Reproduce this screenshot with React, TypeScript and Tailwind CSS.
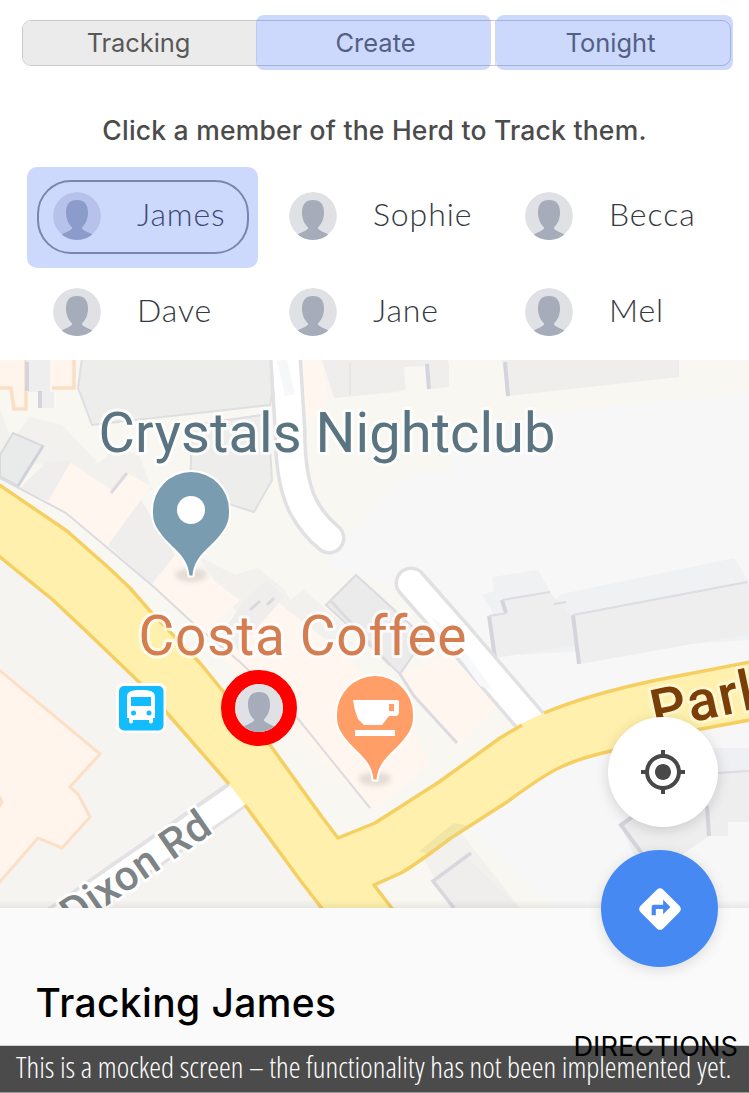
import { MdDirections, MdMyLocation } from "react-icons/md";

const members = ["James", "Sophie", "Becca", "Dave", "Jane", "Mel"];

function Avatar() {
  return (
    <svg viewBox="0 0 48 48" className="block size-12 shrink-0 rounded-full">
      <circle cx="24" cy="24" r="24" fill="#dfe1e5" />
      <path
        d="M24 8C16.500 8 13 12.500 13 20.500C13 27 15.500 32 19 35.500C20 37 17 38.500 8.500 42.500L8 48H40L39.500 42.500C31 38.500 28 37 29 35.500C32.500 32 35 27 35 20.500C35 12.500 31.500 8 24 8Z"
        fill="#a6acb9"
      />
    </svg>
  );
}

function Tabs() {
  return (
    <nav className="relative mt-5 ml-[21.500px] flex h-[46px] w-[709px] rounded-[9px] border border-[#c9c9c9] text-[25.500px] leading-[44px] text-[#585858]">
      <div className="w-[234px] rounded-l-[8px] bg-[#ebebeb] pr-0.5 text-center">
        <span className="tracking-[-0.100px]">Tracking</span>
      </div>
      <div className="w-[239px] border-r border-[#d9d9d9] text-center">Create</div>
      <div className="flex-1 pr-1 text-center">Tonight</div>
      <div className="absolute -top-[6px] left-[233.500px] h-[55px] w-[235px] rounded-[8px] bg-[#4b74f7]/28" />
      <div className="absolute -top-[6px] left-[473px] h-[55px] w-[237px] rounded-[8px] bg-[#4b74f7]/28" />
    </nav>
  );
}

function Members() {
  return (
    <div className="mt-[20px] ml-[37px] grid grid-cols-[236px_236px_236px] grid-rows-[96px_96px]">
      {members.map((name, i) => (
        <div key={name} className="relative flex items-center pl-4">
          <Avatar />
          <span className="mb-[4px] ml-9 font-['Lato',sans-serif] text-[32px] leading-none font-light tracking-[0.900px] text-[#353941]">
            {name}
          </span>
          {i === 0 && (
            <>
              <div className="absolute top-[12px] left-0 h-[74px] w-[212px] rounded-[34px] border-2 border-[#8b8e94]" />
              <div className="absolute -top-[1px] -left-[10px] h-[101px] w-[230.500px] rounded-[10px] bg-[#4b74f7]/28" />
            </>
          )}
        </div>
      ))}
    </div>
  );
}

function StreetMap() {
  return (
    <svg viewBox="0 360 749 548" className="block h-[548px] w-[749px]">
      <defs>
        <filter id="soft" x="-50%" y="-50%" width="200%" height="200%">
          <feGaussianBlur stdDeviation="2.500" />
        </filter>
        <linearGradient id="edge" x1="0" y1="0" x2="0" y2="1">
          <stop offset="0" stopColor="#000" stopOpacity="0" />
          <stop offset="1" stopColor="#000" stopOpacity="0.060" />
        </linearGradient>
      </defs>
      <rect y="360" width="749" height="548" fill="#f8f7f2" />
      <path d="M749 393L600 407L500 422L452 440V470L408 475L374 505L325 565L410 590L530 725L749 670Z" fill="#f7f7f7" />
      <path d="M470 825L560 760L749 715V908H554Z" fill="#f7f7f7" />
      <path d="M0 555L88 633L167 713L245 805L322 908H0Z" fill="#f5f4f0" />

      <g fill="#f2f1ee">
        <path d="M0 410L12 440L30 417L62 425L98 463L120 446L140 457L152 490L110 500L65 470L0 455Z" />
        <path d="M198 556L235 575L246 571L258 568L285 590L290 600L304 590L350 630L300 690L235 610Z" />
        <path d="M325 360H374L400 392L334 398Z" />
        <path d="M378 873L454 822L550 908H394Z" fill="#f8f7f1" />
        <path d="M420 852L454 824L520 908H450Z" />
      </g>

      <g fill="#fff6f0">
        <path d="M70 462L112 490L127 473L151 486L108 545L48 501Z" />
        <path d="M176 553L240 600L205 634L153 585Z" />
        <path d="M275 600L345 655L415 735L430 765L376 810L330 768L240 676L210 642Z" />
        <path d="M400 675L455 650L505 700L459 745L414 696Z" />
        <path d="M294 360H322L328 398L312 420L297 418Z" />
      </g>
      <g fill="#efeeed">
        <path d="M47 462L72 460L48 501L20 488Z" />
        <path d="M141 500L175 555L151 585L108 545Z" />
        <path d="M245 600L266 580L285 596L238 650L222 633Z" />
        <path d="M322 360H679V377L508 396L502 360H448L449 386L430 388L427 366L404 367L406 390L334 398Z" />
      </g>
      <path d="M404 368H427L432 388L449 387V362H492L508 396L406 391Z" fill="#f8f7f1" />
      <path d="M430 365L449 364V387L431 389Z" fill="#efeeed" />
      <path d="M82 358H270L277 370L270 405L92 425L78 388Z" fill="#ededec" stroke="#dfdee1" strokeWidth="2" />
      <path d="M192 425L268 414L272 480L254 512L190 492Z" fill="#ededec" stroke="#dfdee1" strokeWidth="2" />
      <path d="M13 433L43 446L18 486L0 476V455Z" fill="#e9ebeb" stroke="#dad9df" strokeWidth="2" />
      <path d="M43 446L18 486" stroke="#d2d1da" strokeWidth="3" />
      <path d="M127 473L111 493M250 610L260 601M267 605L274 598" stroke="#dcd8de" strokeWidth="3" />
      <path d="M326 605L356 575L425 638L400 674Z" fill="#ebebeb" stroke="#dcdbdf" strokeWidth="2" />
      <path d="M0 478L66 513L110 550L155 588L195 625L240 662L295 715L370 808" fill="none" stroke="#dedbdf" strokeWidth="2" />
      <path d="M400 674L414 696L457 743M330 600L390 665" stroke="#dddbdf" strokeWidth="3" fill="none" />

      <path d="M0 360H28L24 386V408H14L11 388H0Z" fill="#fff5ec" />
      <path d="M0 388H11L14 409H26V360" fill="none" stroke="#fbdfc4" strokeWidth="3.500" />
      <path d="M50 360H73V387H52Z" fill="#fff5ec" />
      <path d="M52 388H74V360" fill="none" stroke="#fbdfc4" strokeWidth="3.500" />
      <path d="M27 360H50V392H54V408H39V392H27Z" fill="#eeeeee" />
      <path d="M27 362V391M40 391V408" stroke="#d5d4dc" strokeWidth="4" />
      <path d="M350 362V395" stroke="#e4e3e5" strokeWidth="1.500" />

      <path d="M492 577L538 570L555 600L562 594L734 558L749 582V640L520 655L482 595L494 591Z" fill="#eff1f3" />
      <path d="M502 600L549 592L560 604L572 616L578 645L495 658L488 616L506 614Z" fill="#eeeeee" />
      <path d="M573 615L746 582H749V634L580 664Z" fill="#eeeeee" />
      <path d="M495 658L489 616M506 613L502 600M579 664L573 615M429 389L427 364M508 396L505 362" fill="none" stroke="#d4d4dc" strokeWidth="4" />
      <path d="M489 616L507 613M502 600L550 592M573 615L747 582M554 604L566 602" fill="none" stroke="#dcdce1" strokeWidth="2" />

      <path d="M285 350L290 430Q290 480 303 506Q313 525 329 538" fill="none" stroke="#e1e1e3" strokeWidth="33" strokeLinecap="round" />
      <path d="M285 350L290 430Q290 480 303 506Q313 525 329 538" fill="none" stroke="#fff" strokeWidth="26" strokeLinecap="round" />
      <path d="M282 360L290 395" stroke="#f5f7f9" strokeWidth="10" />
      <path d="M411 583L455 633L540 732" fill="none" stroke="#e1e1e3" strokeWidth="33" strokeLinecap="round" />
      <path d="M411 583L455 633L540 732" fill="none" stroke="#fff" strokeWidth="26" strokeLinecap="round" />
      <path d="M430 616L448 629L494 691L480 686Z" fill="#f7f8f9" />
      <path d="M241 792L50 925" stroke="#e2e2e4" strokeWidth="31" />
      <path d="M245 790L50 925" stroke="#fff" strokeWidth="24" />

      <path
        d="M-5 482L67 531L110 569L130 588L150 611L200 663L222 690L270 745L322 817L338 838L375 823L439 782L500 738Q520 723 544 713Q590 694 657 680L755 661V719L701 729L611 751Q580 758 561 767Q545 774 507 802L451 838Q415 865 401 873L374 885L397 915H327L300 880L245 805L229 784L167 713L138 681L88 633L53 600L-5 553Z"
        fill="#fff0ad"
      />
      <path d="M-5 482L67 531L110 569L130 588L150 611L200 663L222 690L270 745L322 817L338 838L375 823L439 782L500 738L522 725M544 713Q590 694 657 680L755 661M755 719L701 729L611 751Q580 758 561 767Q545 774 507 802L451 838Q415 865 401 873L374 885L397 915M327 915L300 880L245 805M229 784L167 713L138 681L88 633L53 600L-5 553" fill="none" stroke="#f6cf62" strokeWidth="3.500" strokeLinejoin="round" />
      <path d="M419 851L454 823L470 826L428 854Z" fill="#d9d59b" opacity="0.350" />

      <path d="M0 670L100 754L70 787L78 792L90 817L62 848L38 838L0 884Z" fill="#fff5ec" />
      <path d="M-2 669L100 754L70 787L78 794L90 817L62 848L38 838L-2 884M-1 796L2 802L-1 807" fill="none" stroke="#fddfc5" strokeWidth="3" />

      <path d="M433 881L466 857L520 908H452Z" fill="#efeeed" />
      <path d="M471 853L433 881L454 908" fill="none" stroke="#d8d7de" strokeWidth="3.500" />
      <path d="M700 748H749V775H718L700 790Z" fill="#eef0f3" />
      <path d="M715 773H749V822H728V836H709L645 880L621 826L660 800Z" fill="#eeeeee" />
      <path d="M635 815L621 825L643 855M707 806L709 836" fill="none" stroke="#d4d4dc" strokeWidth="4" />
      <path d="M717 773L749 771" fill="none" stroke="#dcdce1" strokeWidth="2" />

      <g fontFamily="Roboto, sans-serif" strokeLinejoin="round" style={{ paintOrder: "stroke" }}>
        <text x="98.500" y="452" fontSize="56" textLength="457" fill="#5b7482" stroke="#fff" strokeOpacity="0.750" strokeWidth="6">
          Crystals Nightclub
        </text>
        <text x="138.500" y="655" fontSize="55" textLength="328" fill="#d37d50" stroke="#fff" strokeOpacity="0.700" strokeWidth="6">
          Costa Coffee
        </text>
        <text x="0" y="0" transform="translate(73 929) rotate(-34.500)" fontSize="42" fontWeight="500" textLength="171" fill="#7e8485" stroke="#fff" strokeWidth="6">
          Dixon Rd
        </text>
        <text x="0" y="0" transform="translate(655 730) rotate(-12)" fontSize="56" fontWeight="500" letterSpacing="1.500" fill="#7a3e06" stroke="#fff7cf" strokeWidth="6">
          Park
        </text>
      </g>

      <ellipse cx="191" cy="575" rx="16" ry="7" fill="#8a8378" opacity="0.220" filter="url(#soft)" />
      <path d="M192.500 575.500H189.500C187.500 553 169 548 157 528C153 521 153 516 153 510A38 38 0 0 1 229 510C229 516 229 521 225 528C213 548 194.500 553 192.500 575.500Z" fill="#7a9cb0" stroke="#fff" strokeWidth="4" paintOrder="stroke" />
      <circle cx="191" cy="510" r="14" fill="#fff" />

      <ellipse cx="375" cy="779" rx="16" ry="7" fill="#8a8378" opacity="0.220" filter="url(#soft)" />
      <path transform="translate(184 204)" d="M192.500 575.500H189.500C187.500 553 169 548 157 528C153 521 153 516 153 510A38 38 0 0 1 229 510C229 516 229 521 225 528C213 548 194.500 553 192.500 575.500Z" fill="#ff9e67" stroke="#fff" strokeWidth="4" paintOrder="stroke" />
      <path fillRule="evenodd" d="M353 700H397Q399 700 399 702V712Q399 716 395 716H389L382 725H364L358 719Q354 710 353 700ZM389 704V711H394V704ZM355 730H395V736H355Z" fill="#fff" />

      <rect x="116" y="683" width="50" height="50" rx="7" fill="#fff" />
      <rect x="119" y="686" width="44.500" height="44.500" rx="5" fill="#12bcff" />
      <path fillRule="evenodd" d="M127 697C127 691 132 690 141 690C150 690 155 691 155 697V718H153V722Q151 725 149 722V720H133V722Q131 725 129 722V718H127ZM131 697V706H151V697Z" fill="#fff" />
      <circle cx="133.500" cy="713" r="2.500" fill="#12bcff" />
      <circle cx="149" cy="713" r="2.500" fill="#12bcff" />

      <rect y="900" width="749" height="8" fill="url(#edge)" />
    </svg>
  );
}

export default function App() {
  return (
    <div className="flex h-[1093px] w-[749px] flex-col overflow-hidden bg-white font-['Inter',sans-serif]">
      <header className="flex h-[360px] shrink-0 flex-col">
        <Tabs />
        <h1 className="mt-[46px] text-center text-[26.500px] leading-9 font-medium tracking-[0.220px] text-[#4b4b4b]">
          Click a member of the Herd to Track them.
        </h1>
        <Members />
      </header>

      <section className="relative h-[548px] shrink-0">
        <StreetMap />
        <div className="absolute top-[310px] left-[221px] rounded-full border-[14px] border-[#ff0000]">
          <Avatar />
        </div>
        <button className="absolute top-[356.500px] left-[607.500px] flex size-[110.500px] items-center justify-center rounded-full bg-white text-[#484848] shadow-[0_3px_14px_rgba(0,0,0,0.15)]">
          <MdMyLocation size={48} />
        </button>
        <button className="absolute top-[490px] left-[601px] z-10 flex size-[117px] items-center justify-center rounded-full bg-[#4689f2] text-white shadow-[0_3px_14px_rgba(0,0,0,0.12)]">
          <MdDirections size={50} className="shrink-0" />
        </button>
      </section>

      <section className="relative flex flex-1 flex-col justify-between bg-[#fafafa]">
        <h2 className="mt-[71px] ml-[35.500px] text-[39px] leading-[48px] font-medium whitespace-nowrap text-black">
          <span className="tracking-[0.380px]">Tracking James</span>
        </h2>
        <footer className="flex h-[48px] border-t border-b border-t-[#cfcfcf] border-b-[#999] bg-[#4b4b4b] pl-4">
          <span className="z-10 font-['Open_Sans',sans-serif] text-[29.750px] leading-[42px] font-light whitespace-nowrap text-white [font-stretch:75%]">
            This is a mocked screen – the functionality has not been implemented yet.
          </span>
        </footer>
        <span className="absolute top-[123px] right-[11px] text-[27.250px] leading-8 text-black">DIRECTIONS</span>
      </section>
    </div>
  );
}
